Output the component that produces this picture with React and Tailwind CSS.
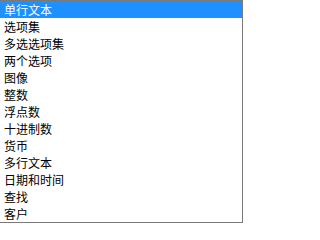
const items = [
  '单行文本',
  '选项集',
  '多选选项集',
  '两个选项',
  '图像',
  '整数',
  '浮点数',
  '十进制数',
  '货币',
  '多行文本',
  '日期和时间',
  '查找',
  '客户',
];

const App = () => {
  return (
    <div className="w-[243px] bg-white border-t border-r border-b border-[#7a7a7a] font-['Noto_Sans_CJK_SC',sans-serif] text-[12px] text-black">
      {items.map((item, i) => (
        <div
          key={item}
          className={`h-[17px] leading-[17px] pl-1 whitespace-nowrap ${i === 0 ? 'bg-[#1e90ff] text-white' : ''}`}
        >
          {item}
        </div>
      ))}
    </div>
  );
};

export default App;
